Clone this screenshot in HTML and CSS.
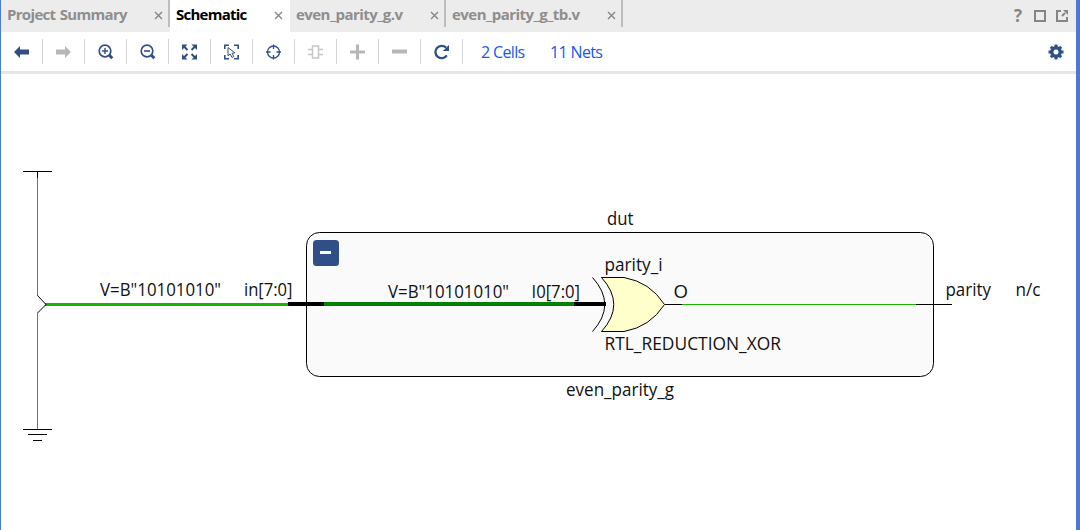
FILE: index.html
```html
<!DOCTYPE html>
<html lang="en">
<head>
<meta charset="utf-8">
<title>Schematic</title>
<link rel="stylesheet" href="styles.css">
</head>
<body>
<div class="window">
  <header class="tabs">
    <div class="tab tab-summary"><span class="label">Project Summary</span><svg class="close" viewBox="0 0 9 9"><path d="M1 1l7 7M8 1L1 8"/></svg></div>
    <div class="tab tab-schematic active"><span class="label">Schematic</span><svg class="close" viewBox="0 0 9 9"><path d="M1 1l7 7M8 1L1 8"/></svg></div>
    <div class="tab tab-source"><span class="label">even_parity_g.v</span><svg class="close" viewBox="0 0 9 9"><path d="M1 1l7 7M8 1L1 8"/></svg></div>
    <div class="tab tab-bench"><span class="label">even_parity_g_tb.v</span><svg class="close" viewBox="0 0 9 9"><path d="M1 1l7 7M8 1L1 8"/></svg></div>
    <div class="controls">
      <span class="help">?</span>
      <svg width="12" height="12" viewBox="0 0 12 12"><path d="M1 1h10v10H1z"/></svg>
      <svg width="12" height="12" viewBox="0 0 12 12"><path d="M5 1H1v10h10V7M6 6l3-3"/><path class="solid" d="M7 0h5v5z"/></svg>
    </div>
  </header>
  <nav class="toolbar">
    <span class="tool"><svg viewBox="0 0 16 16"><path class="fill" d="M0 8l6-6v3.500h9v5H6V14z"/></svg></span>
    <span class="tool off"><svg viewBox="0 0 16 16"><path class="fill" d="M15 8L9 2v3.500H0v5h9V14z"/></svg></span>
    <span class="tool"><svg viewBox="0 0 16 16"><circle cx="7" cy="7" r="5.800" stroke-width="1.700"/><path d="M4 7h6M7 4v6" stroke-width="1.400"/><path d="M11.300 11.300l3 3" stroke-width="3"/></svg></span>
    <span class="tool"><svg viewBox="0 0 16 16"><circle cx="7" cy="7" r="5.800" stroke-width="1.700"/><path d="M4 7h6" stroke-width="1.600"/><path d="M11.300 11.300l3 3" stroke-width="3"/></svg></span>
    <span class="tool"><svg viewBox="0 0 16 16"><path class="fill" d="M0 .5h5.500L0 6zM15 .5H9.500L15 6zM0 15.500h5.500L0 10zM15 15.500H9.500L15 10z"/><path d="M2 2.500l3.500 3.500M13 2.500L9.500 6M2 13.500L5.500 10M13 13.500L9.500 10" stroke-width="2"/></svg></span>
    <span class="tool"><svg viewBox="0 0 16 16"><path d="M.8 5V1.300H5M10 1.300h4.200V5M.8 11v3.700H5M10 14.700h4.200V11" stroke-width="1.600"/><path d="M4 3.500v8.300l2.200-1.800 1.800 3.500 1.800-1-1.700-3.200 2.800-.4z" stroke-width="1"/></svg></span>
    <span class="tool"><svg viewBox="0 0 16 16"><circle cx="7.500" cy="8" r="6" stroke-width="1.300"/><path d="M7.500 .5v4.500M7.500 11v4.500M0 8h4.500M10.500 8h4.500" stroke-width="1.300"/></svg></span>
    <span class="tool pale"><svg viewBox="0 0 16 16"><path d="M4.500 2h6v12h-6zM0 5.500h4M0 10.500h4M11 5.500h4M11 10.500h4" stroke-width="1.500"/></svg></span>
    <span class="tool off"><svg viewBox="0 0 16 16"><path d="M0 8h15M7.500 .5v15" stroke-width="3"/></svg></span>
    <span class="tool off"><svg viewBox="0 0 16 16"><path d="M0 7.500h15" stroke-width="4"/></svg></span>
    <span class="tool"><svg viewBox="0 0 16 16"><path d="M12.800 11.400A6.200 6.200 0 1 1 12 3.600" stroke-width="2.300"/><path class="fill" d="M15 1v6H8.800z"/></svg></span>
    <a class="stat cells">2 Cells</a>
    <a class="stat nets">11 Nets</a>
    <svg class="gear" viewBox="-8 -8 16 16"><circle r="4.200" stroke-width="3.400"/><path d="M0-7.500v3M0 7.500v-3M-7.500 0h3M7.500 0h-3M-5.200-5.200l2 2M5.200 5.200l-2-2M5.200-5.200l-2 2M-5.200 5.200l2-2" stroke-width="3"/></svg>
  </nav>
  <main class="canvas">
    <svg class="schematic" width="1075" height="456" viewBox="1 74 1075 456">
      <rect class="module" x="306.500" y="232.500" width="627" height="144" rx="13"/>
      <g class="crisp">
        <path class="net" d="M37.500 178v118M37.500 313v116"/>
        <path class="pin" d="M23 171.500h29M37.500 172v6M23 429.500h29M28 434.500h19M33 440.500h9"/>
        <path class="net bus" d="M45 304.500h243"/>
        <path class="inner" d="M324 304h250"/>
        <path class="pin thick" d="M288 304h36M574 304h32"/>
        <path class="net" d="M682 304.500h234"/>
        <path class="pin" d="M665 304.500h17M916 304.500h36"/>
      </g>
      <path class="pin" d="M37.500 295.500l8.500 9-8.500 8.500"/>
      <path class="gate" d="M601.500 277.500H624Q650 282 664.500 304.500Q650 327 624 331.500H601.500Q626 304.500 601.500 277.500z"/>
      <path class="pin" d="M592.500 277.500Q617 304.500 592.500 331.500"/>
      <rect class="collapse" x="313" y="240" width="26" height="26" rx="3.500"/>
      <path class="minus" d="M320 252.500h11"/>
      <g class="names">
        <text x="100" y="295.500" textLength="121" lengthAdjust="spacingAndGlyphs">V=B"10101010"</text>
        <text x="244" y="295.500" textLength="48.500" lengthAdjust="spacingAndGlyphs">in[7:0]</text>
        <text x="388" y="297.500" textLength="121" lengthAdjust="spacingAndGlyphs">V=B"10101010"</text>
        <text x="531.500" y="297.500" textLength="48.500" lengthAdjust="spacingAndGlyphs">I0[7:0]</text>
        <text x="607" y="224.500" textLength="26.500" lengthAdjust="spacingAndGlyphs">dut</text>
        <text x="604.500" y="270.500" textLength="58" lengthAdjust="spacingAndGlyphs">parity_i</text>
        <text x="673.500" y="297.500" textLength="14.500" lengthAdjust="spacingAndGlyphs">O</text>
        <text x="604.500" y="349.500" textLength="176.500" lengthAdjust="spacingAndGlyphs">RTL_REDUCTION_XOR</text>
        <text x="566" y="395.500" textLength="108" lengthAdjust="spacingAndGlyphs">even_parity_g</text>
        <text x="945.500" y="295.500" textLength="45.500" lengthAdjust="spacingAndGlyphs">parity</text>
        <text x="1015.500" y="295.500" textLength="25" lengthAdjust="spacingAndGlyphs">n/c</text>
      </g>
    </svg>
  </main>
</div>
</body>
</html>
```
FILE: styles.css
```css
* { box-sizing: border-box; }
body { margin: 0; background: #fff; font-family: "Open Sans", "Noto Sans", sans-serif; }
.window { height: 530px; display: flex; flex-direction: column; border-left: 1px solid #4a7bd0; border-right: 4px solid #4a7bd0; overflow: hidden; }
.tabs { display: flex; height: 32px; flex: none; background: #ececec; }
.tab { display: flex; align-items: center; justify-content: space-between; height: 32px; padding: 0 6px; color: #8e8e8e; font-size: 15px; font-weight: 700; line-height: 28px; background: linear-gradient(#bdbdbd, #bdbdbd) right top / 2px 27px no-repeat; white-space: nowrap; }
.label { height: 32px; }
.close { width: 9px; height: 9px; margin-top: -2px; fill: none; stroke: #858585; stroke-width: 1.4; }
.tab-summary { width: 169px; padding-right: 7px; letter-spacing: -.68px; word-spacing: 1px; }
.tab-schematic { width: 120px; padding-right: 7px; letter-spacing: -.75px; }
.tab-source { width: 156px; padding-right: 7px; letter-spacing: -.55px; }
.tab-bench { width: 177px; padding-right: 7px; letter-spacing: -.52px; }
.tab.active { background: #fff; color: #000; }
.controls { display: flex; align-items: center; gap: 10px; margin-left: auto; padding-right: 8px; color: #858585; }
.controls svg { fill: none; stroke: currentColor; stroke-width: 2; }
.controls .solid { fill: currentColor; stroke: none; }
.help { font: 700 17px/30px "Open Sans", sans-serif; margin-right: 2px; }
.toolbar { display: flex; align-items: center; height: 42px; flex: none; border-bottom: 3px solid #e6e6e6; color: #304f87; }
.tool { display: flex; justify-content: center; align-items: center; width: 42px; height: 25px; border-right: 1px solid #d4d4d4; }
.tool svg, .gear { width: 16px; height: 16px; fill: none; stroke: currentColor; }
.tool .fill { fill: currentColor; stroke: none; }
.off { color: #b7b7b7; }
.pale { color: #c6c6c6; }
.stat { color: #1558ed; font-size: 16px; letter-spacing: -.65px; padding-top: 1px; white-space: nowrap; }
.cells { width: 44px; margin-left: 18px; }
.nets { margin-left: 25px; }
.gear { margin-left: auto; margin-right: 12px; }
.canvas { flex: 1; min-height: 0; }
.schematic { display: block; fill: none; }
.crisp { shape-rendering: crispEdges; }
.module { fill: #fafafa; stroke: #000; }
.net { stroke: #18b500; }
.bus { stroke-width: 3; }
.inner { stroke: #008200; stroke-width: 4; }
.pin { stroke: #000; }
.thick { stroke-width: 4; }
.gate { fill: #ffc; stroke: #000; }
.collapse { fill: #304f87; }
.minus { stroke: #fff; stroke-width: 3; }
.names { fill: #111; font-size: 17.5px; }
```
